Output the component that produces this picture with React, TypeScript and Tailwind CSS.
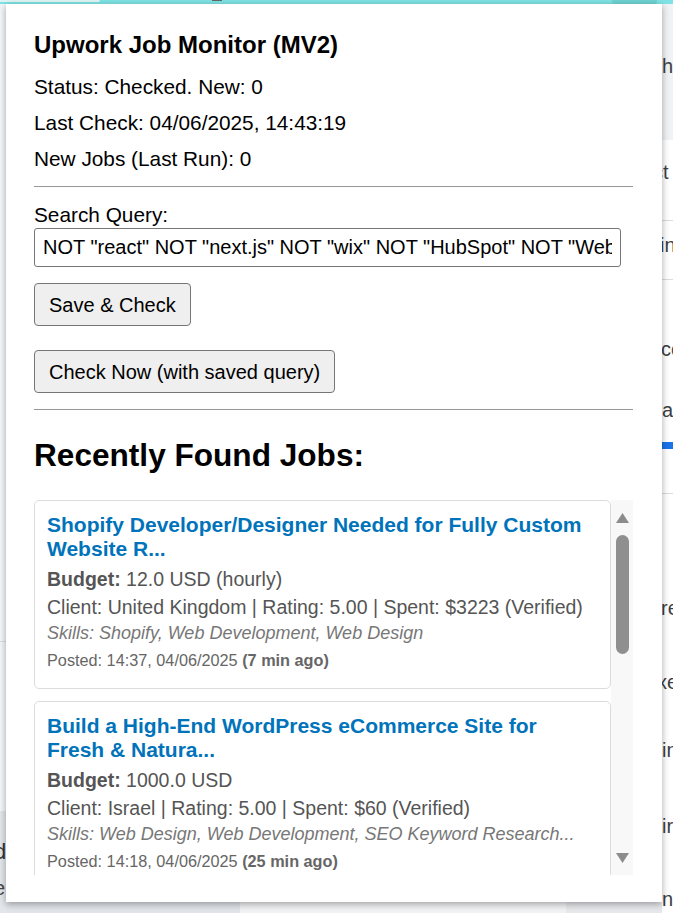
import React from "react";

// Jobs shown in the popup list
const JOBS = [
  {
    title: "Shopify Developer/Designer Needed for Fully Custom Website R...",
    budget: "12.0 USD (hourly)",
    client: "Client: United Kingdom | Rating: 5.00 | Spent: $3223 (Verified)",
    skills: "Skills: Shopify, Web Development, Web Design",
    posted: "Posted: 14:37, 04/06/2025",
    ago: "(7 min ago)",
  },
  {
    title: "Build a High-End WordPress eCommerce Site for Fresh & Natura...",
    budget: "1000.0 USD",
    client: "Client: Israel | Rating: 5.00 | Spent: $60 (Verified)",
    skills: "Skills: Web Design, Web Development, SEO Keyword Research...",
    posted: "Posted: 14:18, 04/06/2025",
    ago: "(25 min ago)",
  },
];

function JobCard({ job }: { job: (typeof JOBS)[number] }) {
  return (
    <div className="shrink-0 rounded-[5px] border border-[#dcdcdc] bg-white px-[12px] pt-[12px] pb-[18px]">
      <div className="max-w-[540px] text-[21px] font-bold leading-[24px] text-[#0073bb]">{job.title}</div>
      <div className="mt-[7px] text-[19.5px] leading-[22px] text-[#555]">
        <b>Budget:</b> {job.budget}
      </div>
      <div className="mt-[6px] whitespace-nowrap text-[19.5px] leading-[22px] text-[#555]">{job.client}</div>
      <div className="mt-[5px] whitespace-nowrap text-[18px] italic leading-[21px] text-[#777]">{job.skills}</div>
      <div className="mt-[7px] text-[16.25px] leading-[19px] text-[#666]">
        {job.posted} <b>{job.ago}</b>
      </div>
    </div>
  );
}

function Scrollbar() {
  return (
    <div className="flex w-[22px] shrink-0 flex-col items-center bg-[#f8f8f8] pt-[13px] pb-[12px]">
      <svg width="13" height="10" viewBox="0 0 13 10">
        <polygon points="6.5,0 13,10 0,10" fill="#8c8c8c" />
      </svg>
      <div className="mt-[12px] h-[119px] w-[13px] rounded-full bg-[#8f8f8f]" />
      <div className="flex-1" />
      <svg width="13" height="10" viewBox="0 0 13 10">
        <polygon points="0,0 13,0 6.5,10" fill="#8c8c8c" />
      </svg>
    </div>
  );
}

// Slivers of the page behind the popup (right edge)
function SideText({ text, shift, top }: { text: string; shift: string; top: string }) {
  return (
    <div className={`${top} ${shift} h-[24px] whitespace-nowrap text-[20px] leading-[24px] text-[#3c4043]`}>{text}</div>
  );
}

export default function App() {
  return (
    <div className="relative h-[913px] w-[673px] overflow-hidden bg-white font-['Liberation_Sans',Arial,sans-serif] text-black">
      {/* Browser top strip */}
      <div className="flex h-[4px] bg-[#7fe3e5]">
        <div className="h-[2px] w-[100px] rounded-br-[3px] bg-[#dff4f4]" />
        <div className="w-[112px]" />
        <div className="h-[1px] w-[10px] bg-[#666]" />
        <div className="w-[390px]" />
        <div className="h-[4px] w-[45px] rounded-b-[3px] bg-[#6fd3d4]" />
      </div>

      {/* Page behind */}
      <div className="flex h-[909px]">
        <div className="flex w-[6px] shrink-0 flex-col overflow-hidden bg-[#f5f6f7]">
          <div className="h-[637px]" />
          <div className="h-px bg-[#dadce0]" />
          <div className="h-[169px]" />
          <div className="flex flex-1 flex-col bg-[#e3e6ea]">
            <div className="-ml-[6px] mt-[29px] h-[24px] text-[22px] leading-[24px] text-[#333]">d</div>
            <div className="-ml-[6px] mt-[12px] h-[24px] text-[20px] leading-[24px] text-[#444]">e</div>
          </div>
        </div>

        <div className="flex w-[656px] shrink-0 flex-col">
          <div className="h-[898px]" />
          <div className="flex h-[11px]">
            <div className="w-[234px] bg-[#e1e4e9]" />
            <div className="w-[326px] bg-[#f0f2f4]" />
            <div className="w-[96px] bg-[#e6e8eb]" />
          </div>
        </div>

        <div className="flex w-[11px] shrink-0 flex-col overflow-hidden">
          <div className="h-[136px] bg-[#f0f2f4] pt-[50px]">
            <div className="h-[24px] text-[20px] leading-[24px] text-[#3c4043]">h</div>
          </div>
          <SideText text="ct" shift="-ml-[9px]" top="mt-[20px]" />
          <div className="mt-[36px] h-px bg-[#dadce0]" />
          <SideText text="in" shift="-ml-[2px]" top="mt-[12px]" />
          <div className="mt-[22px] h-px bg-[#dadce0]" />
          <SideText text="co" shift="-ml-[1px]" top="mt-[57px]" />
          <SideText text="a" shift="ml-0" top="mt-[37px]" />
          <div className="mt-[20px] h-[7px] bg-[#1a73e8]" />
          <div className="mt-[44px] h-px bg-[#dadce0]" />
          <SideText text="re" shift="-ml-[1px]" top="mt-[102px]" />
          <SideText text="xe" shift="-ml-[5px]" top="mt-[50px]" />
          <SideText text="in" shift="ml-0" top="mt-[44px]" />
          <SideText text="ir" shift="ml-0" top="mt-[52px]" />
          <SideText text="nt" shift="ml-0" top="mt-[49px]" />
        </div>
      </div>

      {/* Extension popup */}
      <div className="absolute left-[6px] top-[4px] h-[898px] w-[656px] bg-white px-[28px] pt-[27px] shadow-[0_2px_7px_rgba(0,0,0,0.35)]">
        <div className="w-[599px]">
          <h3 className="text-[24px] font-bold leading-[28px]">Upwork Job Monitor (MV2)</h3>
          <div className="mt-[16px] text-[20.8px] leading-[24px]">Status: Checked. New: 0</div>
          <div className="mt-[12px] text-[20.8px] leading-[24px]">Last Check: 04/06/2025, 14:43:19</div>
          <div className="mt-[12px] text-[20.8px] leading-[24px]">New Jobs (Last Run): 0</div>
          <div className="mt-[15px] h-px bg-[#979797]" />

          <div className="mt-[16px] text-[20.8px] leading-[24px]">Search Query:</div>
          <input
            readOnly
            value={'NOT "react" NOT "next.js" NOT "wix" NOT "HubSpot" NOT "Webflow" NOT "Squarespace"'}
            className="mt-[1px] block h-[39px] w-[587px] rounded-[3px] border border-[#767676] bg-white px-[8px] font-['Liberation_Sans',Arial,sans-serif] text-[20px] text-black outline-none"
          />
          <button
            type="button"
            className="mt-[16px] block h-[43px] rounded-[4px] border border-[#767676] bg-[#efefef] px-[14px] text-[20px] leading-[24px] text-black"
          >
            Save &amp; Check
          </button>
          <button
            type="button"
            className="mt-[24px] block h-[43px] rounded-[4px] border border-[#767676] bg-[#efefef] px-[14px] text-[20px] leading-[24px] text-black"
          >
            Check Now (with saved query)
          </button>
          <div className="mt-[16px] h-px bg-[#979797]" />

          <h2 className="mt-[27px] text-[31.6px] font-bold leading-[36px]">Recently Found Jobs:</h2>

          <div className="mt-[27px] flex h-[375px]">
            <div className="flex w-[577px] flex-col gap-[12px] overflow-hidden">
              {JOBS.map((job) => (
                <JobCard key={job.title} job={job} />
              ))}
            </div>
            <Scrollbar />
          </div>
        </div>
      </div>
    </div>
  );
}
